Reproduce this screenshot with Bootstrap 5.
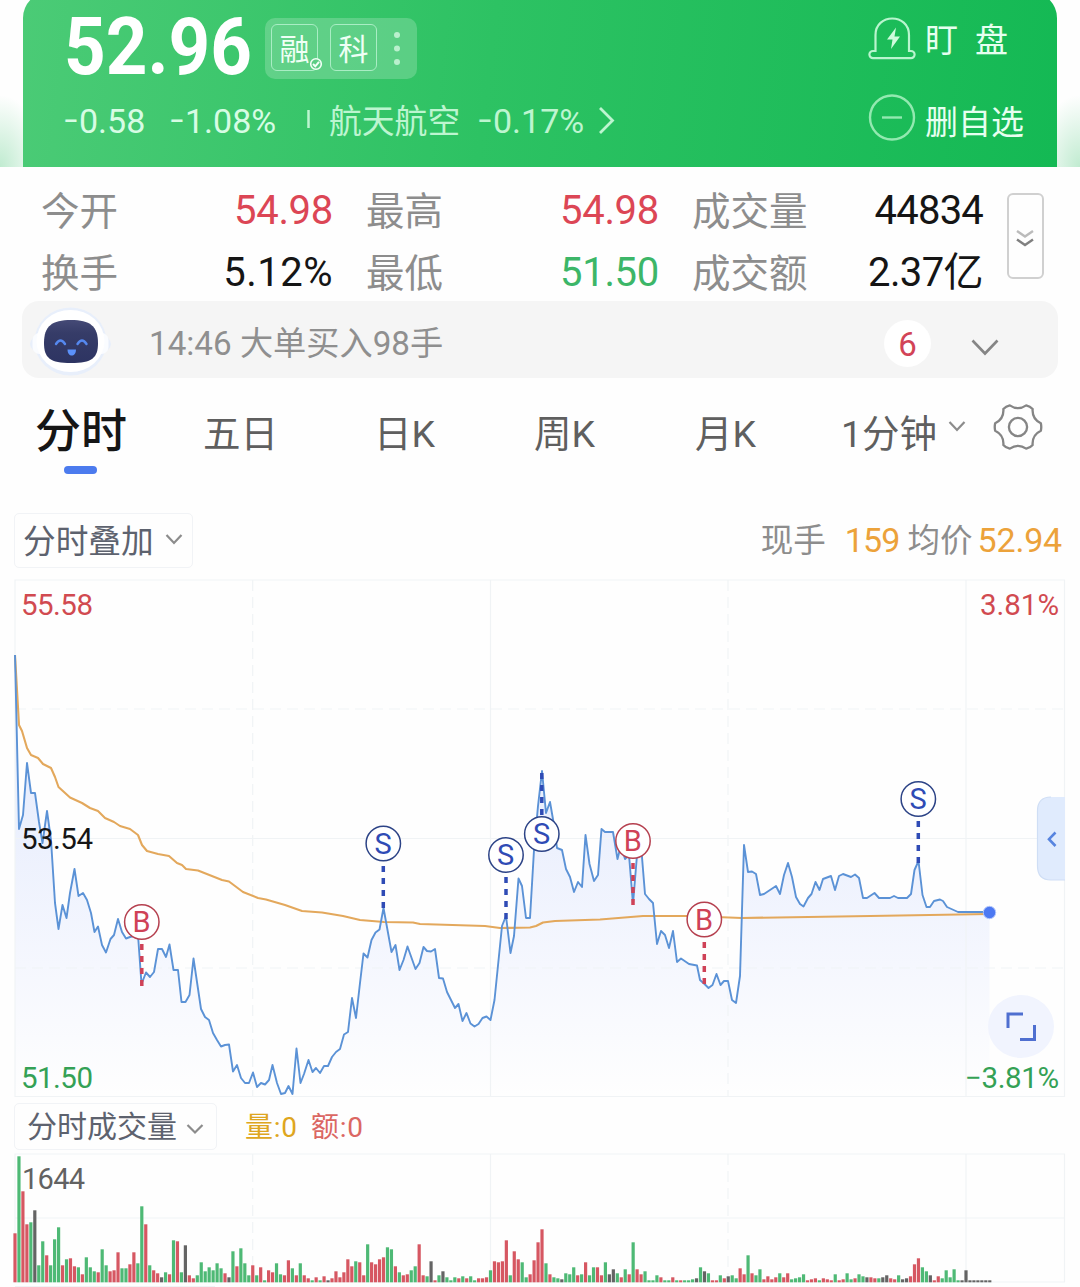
<!DOCTYPE html>
<html lang="zh-CN">
<head>
<meta charset="utf-8">
<meta name="viewport" content="width=device-width, initial-scale=1">
<title>航天航空 分时</title>
<link href="https://cdn.jsdelivr.net/npm/bootstrap@5.3.0/dist/css/bootstrap.min.css" rel="stylesheet">
<style>
body{font-family:Roboto,"Noto Sans CJK SC",sans-serif;background:#fefefe;color:#151515;width:1080px;height:1287px;overflow:hidden;line-height:1}
svg{display:block;flex:none}
svg text{font-family:Roboto,"Noto Sans CJK SC",sans-serif}
.hero-wrap{height:167px;overflow:hidden;padding:0 23px;background:radial-gradient(ellipse 44px 72px at 0 100%,#c0ebd0,rgba(255,255,255,0) 100%),radial-gradient(ellipse 44px 72px at 100% 100%,#c0ebd0,rgba(255,255,255,0) 100%),#fefefe}
.hero{height:175px;margin-top:-8px;padding:8px 33px 0 41px;border-radius:26px 26px 0 0;background:linear-gradient(97deg,#4bcb76 0%,#2dc263 45%,#14b954 100%);color:#e6fff0}
.hero-row1{height:80px;padding-top:17px}
.price-big{font-size:79px;font-weight:700;line-height:58px;color:#fff;width:201px;letter-spacing:0}
.price-big span{display:inline-block;transform:scaleX(.92);transform-origin:left;padding-top:1px}
.tagbox{width:152px;height:61px;border-radius:10px;background:rgba(255,255,255,.2);padding:6px;gap:12px;margin-top:1px}
.tag-i{width:47px;height:47px;border:1.5px solid #a9edc4;border-radius:6px;font-size:30px;line-height:49px;text-align:center;color:#effff5;position:relative}
.tag-i svg{position:absolute;right:-6px;bottom:-1px}
.hero-row2{height:80px;font-size:34px;line-height:46px;color:#d7fce4;padding-top:18px;white-space:nowrap}
.dash{display:inline-block;width:16px;transform:scaleX(.8);transform-origin:left;margin-left:-1px}
.sec{color:#bdf5d0}
.hero-side{width:156px;font-size:33px;line-height:46px;white-space:nowrap}
.quote{height:134px;padding:12px 36px 0 42px}
.q-line{height:62px;font-size:40px;line-height:64px;letter-spacing:-.3px;white-space:nowrap}
.q-line .lab{font-size:38.5px;line-height:66px;color:#8d8d8d;letter-spacing:0;margin-left:-1px}
.up{color:#dc4655}.down{color:#3cb668}
.more-btn{width:37px;height:86px;margin:14px 0 0 24px;border:2.5px solid #d0d0d0;border-radius:6px}
.msg{height:77px;margin:0 22px;border-radius:17px;background:#f5f5f5;color:#8f8f8f;font-size:33.2px;line-height:82px;padding-left:8px}
.count{width:47px;height:47px;border-radius:50%;background:#fff;color:#d24457;font-size:33px;line-height:50px;text-align:center}
.tabs{height:135px;padding:23px 0 0 35px;font-size:37.5px;line-height:66px;color:#5f5f5f;white-space:nowrap}
.tab-on{font-size:46px;font-weight:500;color:#161616;line-height:60px}
.tab-on i{display:block;width:33px;height:8px;border-radius:4px;background:#4c7bee;margin:5px 0 0 29px}
.tool{padding-left:14px}
.pick{border:1.5px solid #f1f3f6;border-radius:5px;color:#5d626e;white-space:nowrap}
.pick-a{width:179px;height:55px;font-size:32.7px;line-height:56px;padding-left:8px}
.pick-b{width:203px;height:47px;font-size:30px;line-height:46px;padding-left:12px}
.now{font-size:34px;line-height:54px;white-space:nowrap;padding-right:18px;color:#eca23a}
.now .lab{color:#8d8d8d;font-size:32.5px}
</style>
</head>
<body>
<header class="hero-wrap">
 <div class="hero d-flex justify-content-between">
  <div>
   <div class="hero-row1 d-flex">
    <div class="price-big"><span>52.96</span></div>
    <div class="tagbox d-flex">
     <div class="tag-i">融<svg width="14" height="14" viewBox="0 0 14 14"><circle cx="7" cy="7" r="5.3" fill="#5bcd84" stroke="#f2fff7" stroke-width="1.6"/><path d="M4 7l2.3 2.3L10 4.8" fill="none" stroke="#f2fff7" stroke-width="2"/></svg></div>
     <div class="tag-i">科</div>
     <svg width="20" height="49" viewBox="0 0 20 49" fill="#b9f0cd"><circle cx="8" cy="11" r="3"/><circle cx="8" cy="24.500" r="3"/><circle cx="8" cy="38" r="3"/></svg>
    </div>
   </div>
   <div class="hero-row2 d-flex align-items-start">
    <span style="width:106px"><span class="dash">−</span>0.58</span><span style="width:137px"><span class="dash">−</span>1.08%</span>
    <svg width="22" height="48"><path d="M1.500 12v18" stroke="#bdf5d0" stroke-width="2.500"/></svg>
    <span class="sec" style="width:149px;font-size:32.800px;padding-top:1px">航天航空</span><span class="sec" style="width:119px"><span class="dash">−</span>0.17%</span>
    <svg width="20" height="48"><path d="M3 10L15.500 22.500 3 35" fill="none" stroke="#bdf5d0" stroke-width="2.800"/></svg>
   </div>
  </div>
  <div class="hero-side">
   <div class="d-flex" style="height:80px;padding-top:15px">
    <svg width="57" height="50" viewBox="868 15 57 50" fill="none" stroke="#b9f5ce" stroke-width="2.200"><path d="M875.500 51V35C875.500 13 909 13 909 35V51H911A3.600 3.600 0 0 1 911 58.200H873A3.600 3.600 0 0 1 873 51Z"/><path d="M896 27.500L887 39.500H892.500L891 49 900 36.500H894.500Z" fill="#cffbdd" stroke="none"/></svg>
    <span style="margin-top:3px">盯<span style="margin-left:17px">盘</span></span>
   </div>
   <div class="d-flex" style="padding-top:14px">
    <svg width="57" height="48" viewBox="0 0 57 48" fill="none" stroke="#92e9b0" stroke-width="2.400"><circle cx="24" cy="23.500" r="22"/><path d="M14 23.500h20"/></svg>
    <span style="margin-top:6px">删自选</span>
   </div>
  </div>
 </div>
</header>

<section class="quote d-flex">
 <div style="width:291px">
  <div class="q-line d-flex justify-content-between"><span class="lab">今开</span><span class="up">54.98</span></div>
  <div class="q-line d-flex justify-content-between"><span class="lab">换手</span><span style="letter-spacing:.5px">5.12%</span></div>
 </div>
 <div style="width:292px;margin-left:34px">
  <div class="q-line d-flex justify-content-between"><span class="lab">最高</span><span class="up">54.98</span></div>
  <div class="q-line d-flex justify-content-between"><span class="lab">最低</span><span class="down">51.50</span></div>
 </div>
 <div style="width:290px;margin-left:34px">
  <div class="q-line d-flex justify-content-between"><span class="lab">成交量</span><span style="letter-spacing:-.8px">44834</span></div>
  <div class="q-line d-flex justify-content-between"><span class="lab">成交额</span><span style="letter-spacing:-.6px">2.37亿</span></div>
 </div>
 <div class="more-btn"><svg width="32" height="81" viewBox="0 0 32 81" fill="none" stroke-width="2.400"><path d="M8 36l8 5.500 8-5.500" stroke="#bbb"/><path d="M8 44.500l8 5.500 8-5.500" stroke="#808080"/></svg></div>
</section>

<section class="msg d-flex align-items-center">
 <svg width="119" height="77" viewBox="30 301 119 77">
  <defs><linearGradient id="face" x1="0" y1="0" x2="0" y2="1"><stop offset="0" stop-color="#454a76"/><stop offset=".3" stop-color="#363c68"/><stop offset="1" stop-color="#2d3462"/></linearGradient></defs>
  <ellipse cx="70.500" cy="341.500" rx="36" ry="34" fill="#e8effb"/><ellipse cx="70.500" cy="344" rx="40.500" ry="15" fill="#e8effb"/>
  <rect x="32.500" y="333" width="76" height="21" rx="7" fill="#fafcff"/>
  <ellipse cx="70.500" cy="341" rx="34" ry="31" fill="#fff"/>
  <path d="M44 343C44 326 52 320 71 320S98 326 98 343C98 358 92 363 71 363S44 358 44 343Z" fill="url(#face)"/>
  <path d="M56 344q4.500-7 9 0M77.500 344q4.500-7 9 0" fill="none" stroke="#5588ef" stroke-width="2.400" stroke-linecap="round"/>
  <path d="M67.500 349.500h8.500c0 8-8.500 8-8.500 0Z" fill="#5b91fa"/>
 </svg>
 <span class="flex-grow-1" style="padding-top:8px">14:46 大单买入98手</span>
 <div class="count" style="margin-top:8px">6</div>
 <svg width="127" height="77"><path d="M41.500 39.500l12.500 13 12.500-13" fill="none" stroke="#858585" stroke-width="2.600"/></svg>
</section>

<nav class="tabs d-flex align-items-start">
 <div class="tab-on" style="width:168px">分时<i></i></div>
 <span style="width:171px">五日</span><span style="width:160px">日K</span><span style="width:161px">周K</span><span style="width:146px">月K</span><span style="width:107px">1分钟</span>
 <svg width="44" height="50"><path d="M1.500 21l7.500 8 7.500-8" fill="none" stroke="#8c8c8c" stroke-width="2.200"/></svg>
 <svg width="52" height="52" viewBox="-28 -28 56 56" fill="none" stroke="#858585" stroke-width="2.500" stroke-linejoin="round"><path d="M24.600-4Q25.500 0 24.600 4Q15 8.650 15.760 19.300Q13 22.500 8.840 23.300Q0 17.300-8.840 23.300Q-13 22.500-15.760 19.300Q-15 8.650-24.600 4Q-25.500 0-24.600-4Q-15-8.650-15.760-19.300Q-13-22.500-8.840-23.300Q0-17.300 8.840-23.300Q13-22.500 15.760-19.300Q15-8.650 24.600-4Z"/><circle r="9.800"/></svg>
</nav>

<div class="tool d-flex justify-content-between" style="height:66px">
 <div class="pick pick-a d-flex"><span style="width:142px">分时叠加</span><svg width="18" height="50"><path d="M1.500 21l7.500 8 7.500-8" fill="none" stroke="#8c8c8c" stroke-width="2.200"/></svg></div>
 <div class="now"><span class="lab">现手</span><span style="margin-left:19px;letter-spacing:-.8px">159</span><span class="lab" style="margin-left:8px">均价</span><span style="margin-left:5px;letter-spacing:-.2px">52.94</span></div>
</div>

<svg width="1080" height="524" viewBox="0 579 1080 524">
 <defs><linearGradient id="area" gradientUnits="userSpaceOnUse" x1="0" y1="655" x2="0" y2="1096"><stop offset="0" stop-color="#dfe7fe"/><stop offset=".35" stop-color="#eaeffd"/><stop offset=".7" stop-color="#f5f7fe"/><stop offset="1" stop-color="#fefefe"/></linearGradient></defs>
 <path id="fill" fill="url(#area)"/>
 <g fill="none" stroke="#f0f3f5" stroke-width="1.200"><path d="M15 580H1064.500V1096.500H15ZM15 838.500H1064M490.500 580V1096M966 580V1096"/><path stroke-dasharray="11 6" d="M15 709H1064M15 968H1064M252.700 580V1096M728 580V1096"/></g>
 <path id="avg" fill="none" stroke="#e3a85c" stroke-width="2.100" stroke-linejoin="round"/>
 <path id="price" fill="none" stroke="#5b92d6" stroke-width="1.900" stroke-linejoin="round"/>
 <circle cx="989.500" cy="912.500" r="6.200" fill="#4d79f2" stroke="#b3c7fc" stroke-width="1"/>
 <g id="marks" font-size="29" text-anchor="middle"></g>
 <g font-size="29.500">
  <text x="21" y="615" textLength="72" fill="#d14a50">55.58</text>
  <text x="21" y="849" textLength="72" fill="#151515">53.54</text>
  <text x="21" y="1088" textLength="72" fill="#34a155">51.50</text>
  <text x="980" y="615" textLength="79" fill="#d14a50">3.81%</text>
 </g>
 <path d="M1065 797H1051Q1037.500 797 1037.500 811V866Q1037.500 880 1051 880H1065Z" fill="#e0ebfd"/><path d="M1065 880H1051Q1037.500 880 1037.500 866V811Q1037.500 797 1051 797" fill="none" stroke="#cfdef5" stroke-width="1.200"/>
 <path d="M1055.500 832.500L1049 839.200 1055.500 846" fill="none" stroke="#5784df" stroke-width="2.600"/>
 <ellipse cx="1021" cy="1026.500" rx="33" ry="31.500" fill="#f1f4fe"/>
 <path d="M1008 1028V1014H1023M1034.500 1025V1039.500H1020" fill="none" stroke="#4f6fd0" stroke-width="3"/>
 <text x="965" y="1088" font-size="29.500" textLength="94" fill="#34a155">−3.81%</text>
</svg>

<div class="tool d-flex" style="height:50px">
 <div class="pick pick-b d-flex"><span style="width:159px">分时成交量</span><svg width="18" height="45"><path d="M1.500 21l7.500 7.500L16.500 21" fill="none" stroke="#8c8c8c" stroke-width="2.200"/></svg></div>
 <svg width="160" height="47" viewBox="217 1103 160 47" font-size="28"><text x="245" y="1136.500" textLength="52" fill="#dea620">量:0</text><text x="311" y="1136.500" textLength="52" fill="#db6763">额:0</text></svg>
</div>

<svg width="1080" height="134" viewBox="0 1153 1080 134">
 <g fill="none" stroke="#f0f3f5" stroke-width="1.200"><path d="M15 1154H1064.500V1282H15ZM15 1218H1064M490.500 1154V1282M966 1154V1282M15 1286.500H215"/><path stroke-dasharray="11 6" d="M252.700 1154V1282M728 1154V1282"/></g>
 <g id="vol"></g>
 <text x="22" y="1189" font-size="29" textLength="63" fill="#626262">1644</text>
</svg>

<script src="https://cdn.jsdelivr.net/npm/bootstrap@5.3.0/dist/js/bootstrap.bundle.min.js"></script>
<script>
const price="15,655 19,829 23,815 27,763 31,793 35,793 39,822 42.5,843 47,811 51,840 55,903 58.5,929 62.5,905 66.5,918 70,893 74.5,869 78.5,896 83,893 87,900 91,913 94.500,932 98,926.5 102,945 106,952.5 110.5,939 114,935 118,919 122,932 126,938.5 130,937 138,935 141.500,984 146,972.5 150,977 154,972 158,949 162,949 166,957 169.5,944.5 173.5,970 178,970 181.5,1002 185.5,1002 189.5,995 193.5,958.5 201,1009 205,1017 209,1020 213,1033 217,1040 221,1046.5 225,1045 229,1044.5 233,1071.5 237,1065 241,1078 245,1083 249,1083 253,1072.5 257,1087 261,1083 265,1084.5 269,1080 272.5,1065 277,1083 281,1094 285,1093 288.5,1086 292.5,1094 296.5,1048.5 300.5,1083 304,1074 308.5,1060 312.5,1072 316,1068 320,1073 324,1066 328,1066 332,1057 336,1052 340,1049 344,1034.5 348,1032 352,998 356,1018 360,983 363.5,953.5 367.5,957.5 371.5,940 375.5,932.5 379.5,929.5 383.5,908 391.5,952 395.5,945 399.5,970 403.5,960 407.5,946.5 415.5,969 419.5,963 423.5,947 427,951 431,951.5 435,949 439,978 443,978.5 447,992 451,1000 455,1008 458.5,1004 462.5,1021 466.5,1013 470.5,1023.5 474.5,1026.5 478.5,1024 482.5,1018 486.5,1016.5 490.5,1020 494.5,1000 502,926 506,916 510.5,953 514,936 518.5,878.5 522,886 526,918 530,918 534,850 538,806 542,771 546,813 550,802 554,825 557,848 562,850 566,869 570,877 574,892 578,882 582,887 585.5,835 589.5,864 594,881 598,875 601.5,829 605,832 613,832 617.5,859 621,845 625,859 629,855 633,904 637,855 641,845 645,894 649,899 653,903 657,944 661,931 665,935 669,948 673,931 677,962 681,958.5 689,964 697,965.5 700,980 704.5,984 708.5,988 712.5,985 716.5,974 720.5,985 724,981 728,981 732,1000 736,1003 740,976 742,910 744,845 748,872 752,871.5 756,874 760,895 764,894 776,886 780,894 784,875 788,863 792,877 796,897 800,904 803.5,906.5 808,898 811.5,894 815.5,882 819.5,890 823,879 831,876 835,890 839,876 843,874 851,877 855,874.5 859,878 863,898 867,898 874.5,893 879,898 890,898 894,896 898,898 907,898 911,894 914.5,870 918.5,861 922.5,895 926.5,907 930,907 934,901 940,899.5 943,901 947,907 958,912 989,912";
const avg="15,655 19,725 22,731 27,748 31,755 38,758 43,764 51,768 55,777 58.5,787 70,797.5 82,803 90,808 98,811 105,818 114,822 120,826 130,829 138,835 142,845 147,851 158,854 169,856 177,863 182,865 186,869 198,870.5 222,880 229,881.5 237,887.5 243,892 258,898 266,899.5 285,905 302,911 322,912.5 343,916 360,920 384,922 413,922.5 420,924 485,926 500,928 530,927.5 536,926 543,922.5 555,921 600,919.5 643,916 690,916 742,918 870,916 989,914";
document.getElementById('price').setAttribute('d','M'+price);
document.getElementById('fill').setAttribute('d','M'+price+' 989.5,912 989.5,1096 15,1096Z');
document.getElementById('avg').setAttribute('d','M'+avg);

// trade markers: letter, centre x, centre y, stem start, stem end
document.getElementById('marks').innerHTML=[['B',141.8,922,944,986],['S',383.3,843.5,865,908],['S',506,855,876.5,919],['S',541.8,834,771,815],['B',633,841,863,905],['B',704.300,919.5,941,984],['S',918.3,799,821,863]].map(([t,x,y,a,b])=>{
 const c=t=='B'?'#cf4257':'#2f4bb5',e=t=='B'?'#b5404f':'#2c4386';
 return `<path d="M${x} ${b}V${a}" stroke="${c}" stroke-width="3.500" stroke-dasharray="6 6"/><circle cx="${x}" cy="${y}" r="17.2" fill="#fff" stroke="${e}" stroke-width="1.500"/><text x="${x-.3}" y="${y+10}" fill="${c}">${t}</text>`}).join('');

// one bar per minute: colour code and height
const vol="r49 g126 r91 r58 g60 d72 g17 g41 r27 g17 g43 g55 r17 g23 r24 r16 g15 r8 g25 g15 g11 r10 g33 g17 r11 r12 r30 g14 g14 r18 r30 g19 g76 r58 g17 r12 r9 d5 g10 r8 g42 r41 g10 d37 r7 r4 g7 g20 g11 g15 g12 g19 g14 r9 d5 g31 r16 g34 g19 g7 r17 g7 r15 g2 r12 r10 g19 g8 r7 r22 g14 r7 g19 r7 r4 g2 r5 g2 r6 d2 r4 r11 r5 r10 r23 r16 g21 r20 r7 g38 r20 r18 r23 r25 g35 g33 r16 g10 r7 r8 g12 g16 r38 r7 g6 d21 r2 g7 d11 g5 g2 g5 r4 g6 r4 g6 g2 r4 r4 r5 g12 r21 r20 r21 r42 g7 r31 r23 g20 g5 r8 r22 r40 r53 g19 r8 g5 g4 d3 g9 g8 g15 r7 g8 r20 g7 g15 r15 r7 g20 d8 d13 g9 r5 g13 r8 g40 r13 r8 g11 g2 g2 g7 r5 g2 g2 r5 g2 r2 g2 g2 g3 d4 g15 d11 g9 r2 r2 g7 r4 d6 g7 g4 r14 r8 g27 r9 g7 g13 r3 r6 r3 r5 g9 r5 r9 g3 g4 g5 g8 r2 r3 r4 g2 r4 r3 r2 g8 r2 r3 g9 g3 r4 g8 g6 d5 r5 r4 g4 d5 d7 r4 r3 g7 d3 d4 r6 r18 r24 g15 g11 d7 r2 r6 g4 g12 g5 g13 g2 d2 d12 d2 d2 d2 d2 d2 d2".split(' ');
const tone={r:'#d65762',g:'#4eb975',d:'#646464'};
document.getElementById('vol').innerHTML=vol.map((v,i)=>`<rect x="${(13.4+i*3.9625).toFixed(2)}" y="${1282.3-v.slice(1)}" width="3.2" height="${v.slice(1)}" fill="${tone[v[0]]}"/>`).join('');
</script>
</body>
</html>
